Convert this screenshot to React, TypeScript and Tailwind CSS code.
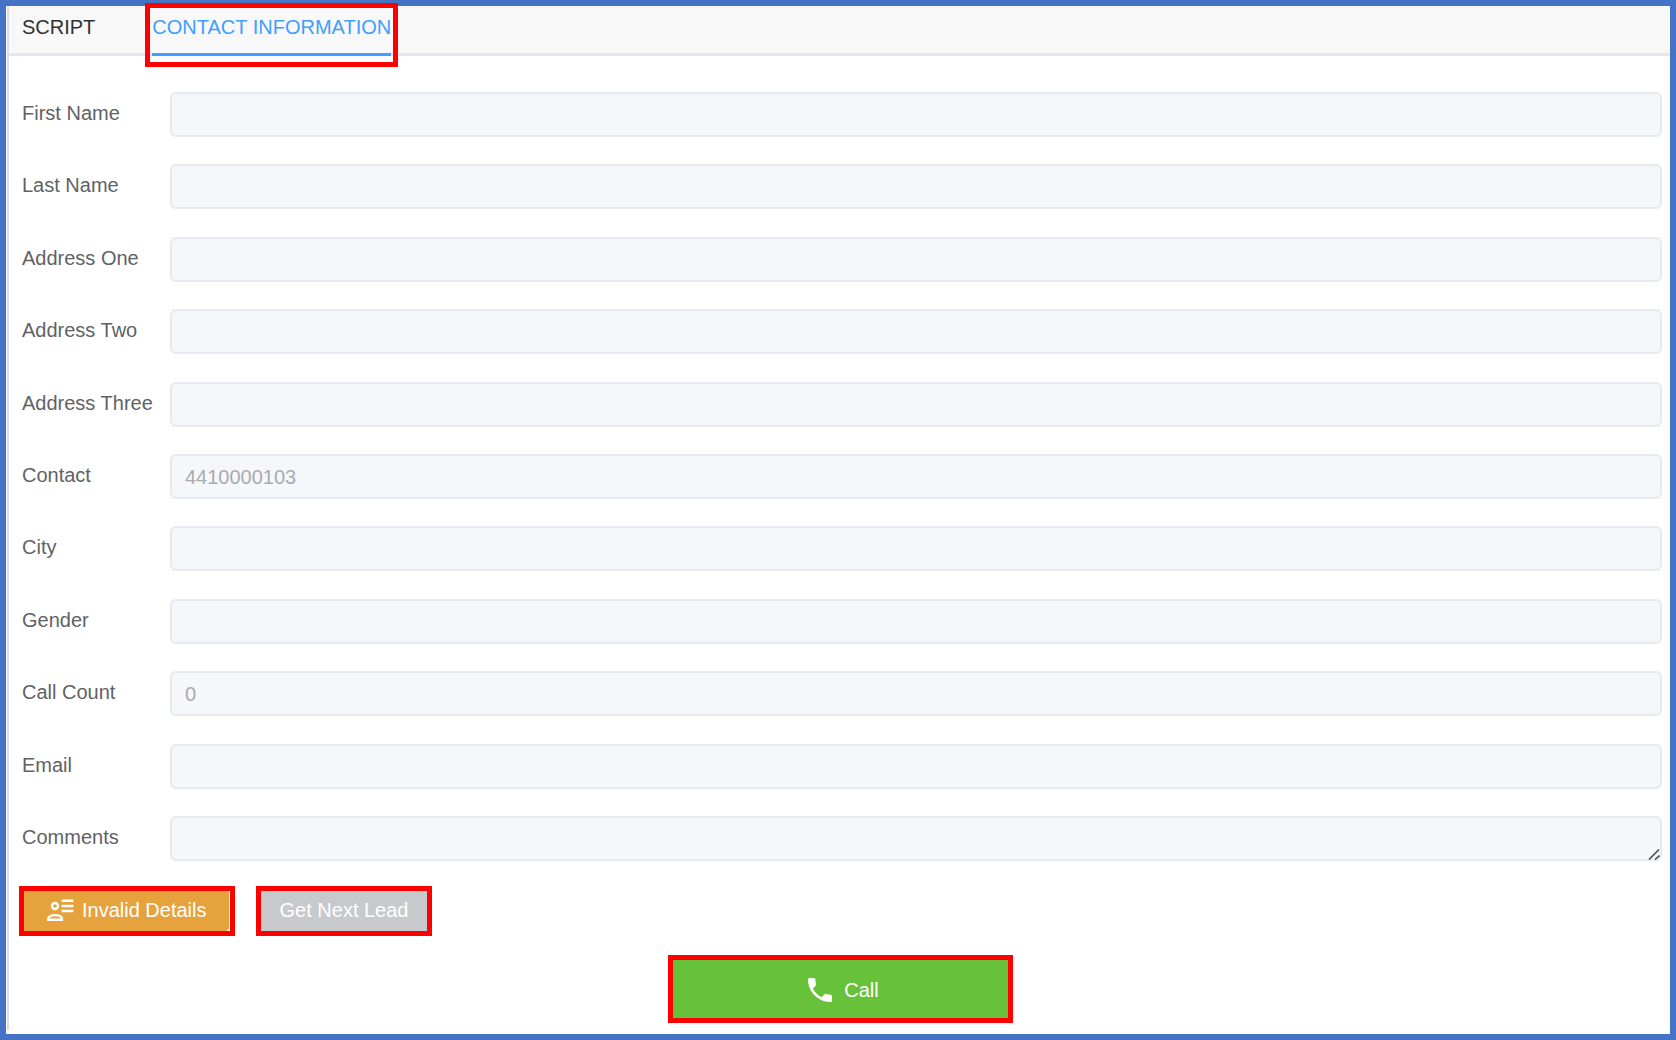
type Field = { id: string; label: string; value: string };

const fields: Field[] = [
  { id: "first-name", label: "First Name", value: "" },
  { id: "last-name", label: "Last Name", value: "" },
  { id: "address-one", label: "Address One", value: "" },
  { id: "address-two", label: "Address Two", value: "" },
  { id: "address-three", label: "Address Three", value: "" },
  { id: "contact", label: "Contact", value: "4410000103" },
  { id: "city", label: "City", value: "" },
  { id: "gender", label: "Gender", value: "" },
  { id: "call-count", label: "Call Count", value: "0" },
  { id: "email", label: "Email", value: "" },
];

const controlClass =
  "block h-[45px] w-full min-w-0 flex-1 resize-none rounded-md border-2 border-[#e6e9ef] bg-[#f5f7fa] px-[13px] pt-0.5 text-xl text-[#a8abb2] outline-none";
const labelClass = "w-[148px] shrink-0 pb-[3px] text-[#606266]";

function ContactCardIcon() {
  return (
    <svg className="h-6 w-7" viewBox="0 0 28 24" fill="none" stroke="currentColor" aria-hidden="true">
      <circle cx="9" cy="8" r="3" strokeWidth="2.4" />
      <path d="M2.3 21.8v-1.1c0-2.3 3.7-3.6 6.8-3.6s6.8 1.3 6.8 3.6v1.1z" strokeWidth="2.4" />
      <path d="M15.6 2.7h11.8M15.6 7.9h11.8M15.6 13h11.8" strokeWidth="2.5" />
    </svg>
  );
}

function PhoneIcon() {
  return (
    <svg className="size-8" viewBox="0 0 24 24" fill="currentColor" aria-hidden="true">
      <path d="M6.62 10.79c1.44 2.83 3.76 5.14 6.59 6.59l2.2-2.2c.27-.27.67-.36 1.02-.24 1.12.37 2.33.57 3.57.57.55 0 1 .45 1 1V20c0 .55-.45 1-1 1-9.39 0-17-7.61-17-17 0-.55.45-1 1-1h3.5c.55 0 1 .45 1 1 0 1.25.2 2.45.57 3.57.11.35.03.74-.25 1.02l-2.2 2.2z" />
    </svg>
  );
}

export default function App() {
  return (
    <div className="flex min-h-screen flex-col border-6 border-[#4472c4] bg-white pb-1 pl-px font-['Liberation_Sans',Arial,sans-serif] text-xl leading-6">
      <div className="flex flex-1 flex-col border-l-2 border-[#dcdcdf]">
        <nav className="flex h-[50px] gap-[57px] border-b-3 border-[#e4e7ed] bg-[#f8f8f8] pl-[13px]" role="tablist">
          <button type="button" role="tab" aria-selected="false" className="h-[50px] pb-[9px] text-[#303133]">
            SCRIPT
          </button>
          <button
            type="button"
            role="tab"
            aria-selected="true"
            className="relative h-[50px] border-b-3 border-[#409eff] pb-1.5 text-[#409eff]"
          >
            CONTACT INFORMATION
            <span className="pointer-events-none absolute -inset-x-[7px] -top-[3px] -bottom-3.5 border-5 border-[#ff0000]" />
          </button>
        </nav>

        <form className="flex flex-1 flex-col pt-9 pr-2 pl-[13px]">
          <div className="flex flex-1 flex-col justify-between gap-4">
            {fields.map((field) => (
              <div key={field.id} className="flex items-center">
                <label htmlFor={field.id} className={labelClass}>
                  {field.label}
                </label>
                <input id={field.id} type="text" readOnly defaultValue={field.value} className={controlClass} />
              </div>
            ))}
            <div className="flex items-center">
              <label htmlFor="comments" className={labelClass}>
                Comments
              </label>
              <div className="relative flex min-w-0 flex-1">
                <textarea id="comments" readOnly rows={1} className={controlClass} />
                <svg
                  className="pointer-events-none absolute right-0.5 bottom-px size-3"
                  viewBox="0 0 12 12"
                  fill="none"
                  stroke="#4b4d50"
                  strokeWidth="1.6"
                  aria-hidden="true"
                >
                  <path d="M1 11.5L11 1.5M7 11.5L11.5 7.5" />
                </svg>
              </div>
            </div>
          </div>

          <div className="mt-[25px] -ml-[3px] flex gap-[21px] text-white">
            <div className="border-5 border-[#ff0000] bg-white pr-px">
              <button type="button" className="flex h-10 items-center rounded-br-sm bg-[#e6a23c] pr-[22px] pb-0.5 pl-[22px]">
                <ContactCardIcon />
                <span className="ml-2">Invalid Details</span>
              </button>
            </div>
            <button type="button" disabled className="h-[50px] border-5 border-[#ff0000] bg-[#c8c9cc] px-[19px] pb-0.5">
              Get Next Lead
            </button>
          </div>

          <div className="mt-[19px] mr-[3px] mb-[7px] flex justify-center">
            <button
              type="button"
              className="flex h-[68px] w-[345px] items-center justify-center gap-2 border-5 border-[#ff0000] bg-[#67c23a] pt-0.5 pl-0.5 text-white"
            >
              <PhoneIcon />
              <span>Call</span>
            </button>
          </div>
        </form>
      </div>
    </div>
  );
}
